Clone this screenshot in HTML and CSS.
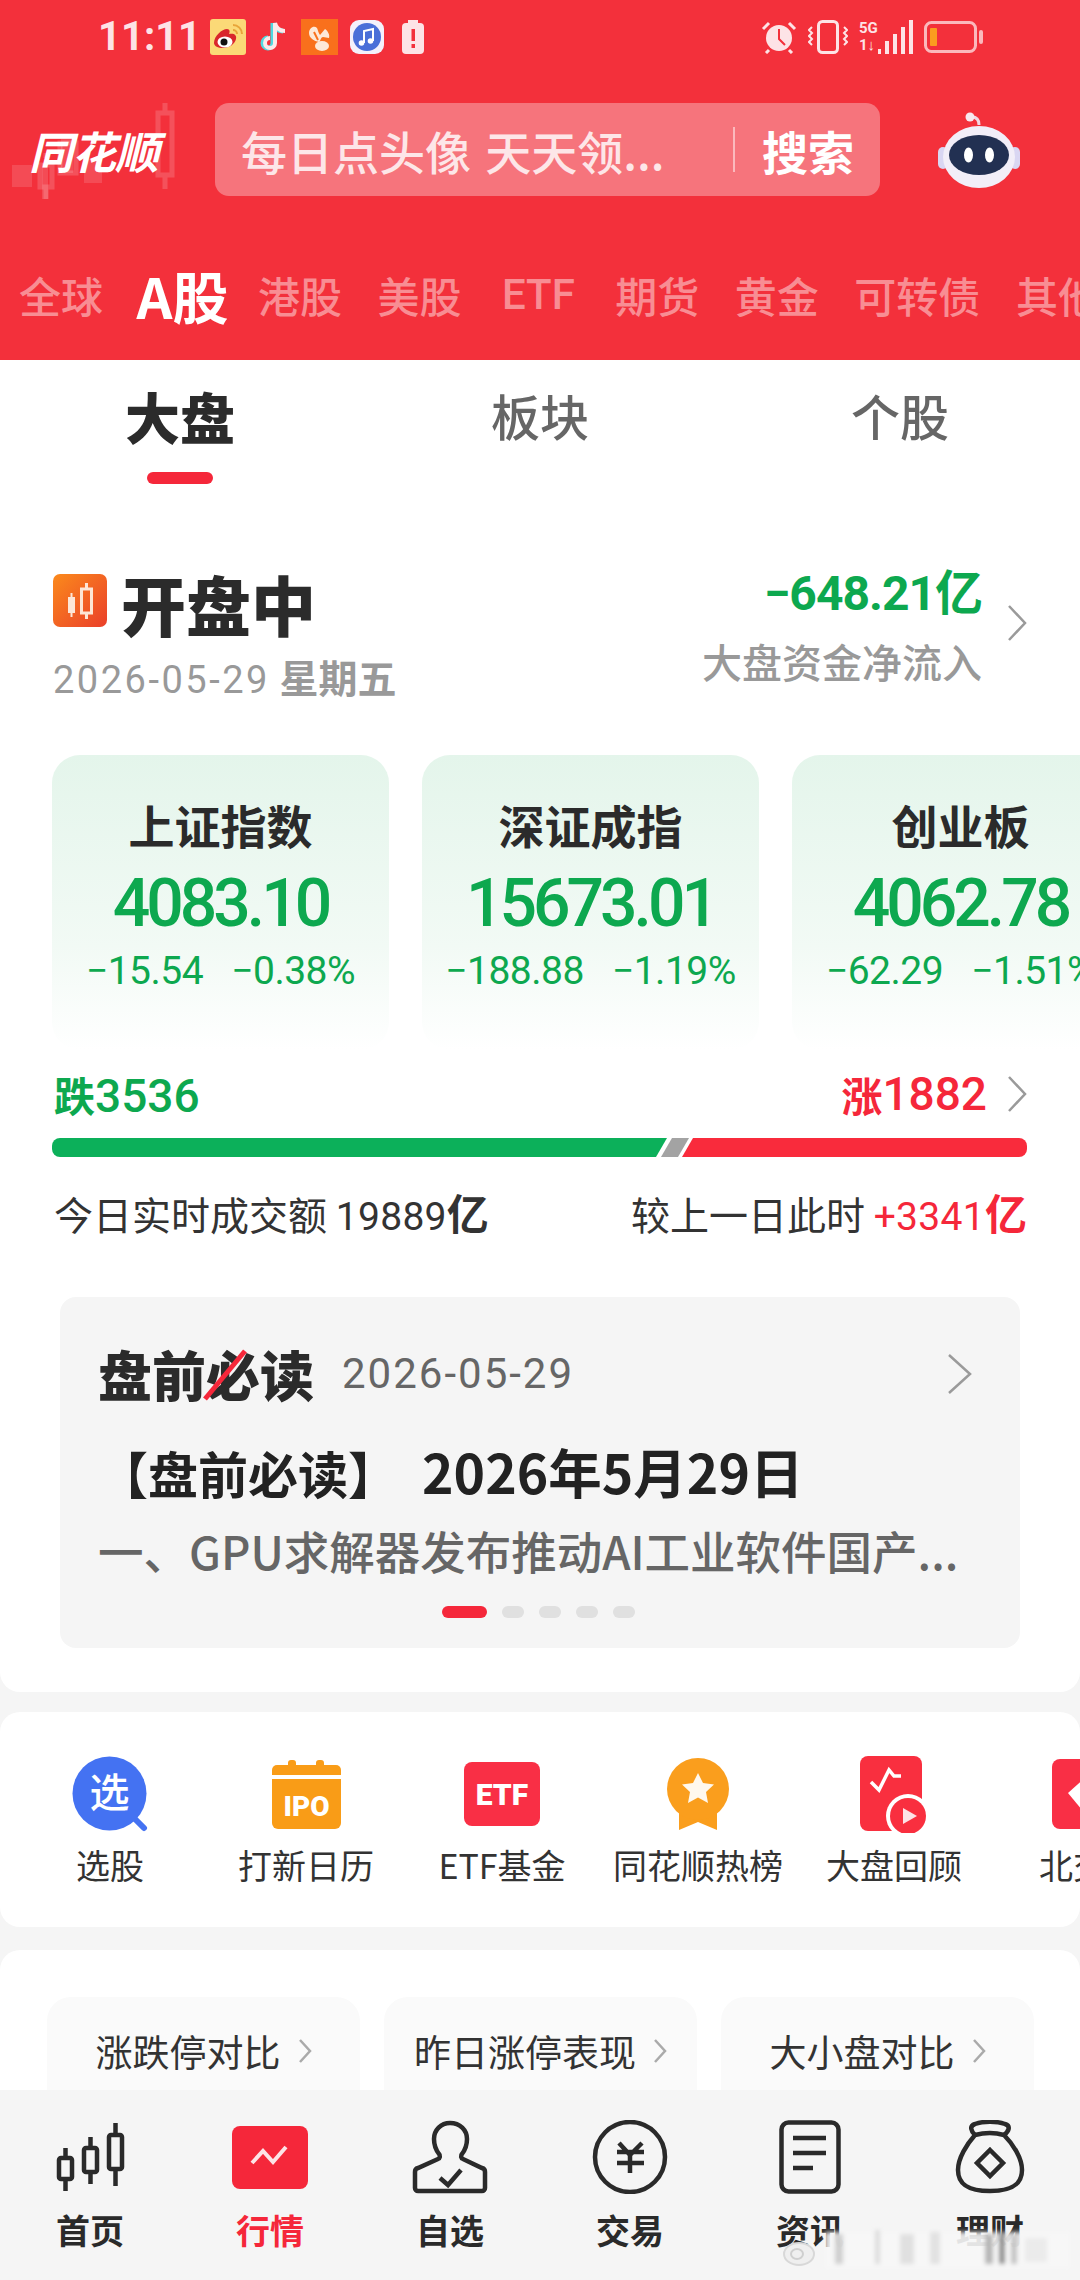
FILE: index.html
```html
<!DOCTYPE html>
<html>
  <head>
    <meta charset="utf-8">
    <title>同花顺 行情</title>
    <link rel="stylesheet" href="styles.css">
  </head>
  <body>
    <div class="page">
      <header class="header">
        <div class="status">
          <span class="time">11:11</span>
          <svg class="st-weibo" width="36" height="36" viewBox="0 0 36 36">
            <rect width="36" height="36" rx="3" fill="#fbd977"/>
            <path d="M23 6a9 9 0 0 1 9 9M23 11a4 4 0 0 1 4 4" fill="none" stroke="#e8a53a" stroke-width="2"/>
            <path d="M4 24c0-7 8-14 13-14 3 0 3 3 2 5 5-1 8 1 7 5-1 5-7 9-13 9-5 0-9-2-9-5z" fill="#d9262c"/>
            <ellipse cx="15" cy="23" rx="7.500" ry="5.500" fill="#fff"/>
            <circle cx="14" cy="23" r="3.500" fill="#111"/>
          </svg>
          <svg class="st-tiktok" width="28" height="34" viewBox="0 0 28 34">
            <path d="M15 3v20a5 5 0 1 1-5-5M15 3c1 5 5 8 10 8" fill="none" stroke="#4fd8e0" stroke-width="5"/>
            <path d="M17 3v20a5 5 0 1 1-5-5M17 3c1 5 5 8 10 8" fill="none" stroke="#fde8ea" stroke-width="4"/>
          </svg>
          <svg class="st-uc" width="37" height="36" viewBox="0 0 37 36">
            <rect width="37" height="36" fill="#f9701c"/>
            <path d="M8 14c0-5 5-8 8-5 1 2 1 4 3 7l5-6c3 2 5 6 4 9l-6-1c-2 0-2 3-4 5-5-1-10-4-10-9z" fill="#fde8d8"/>
            <ellipse cx="21" cy="27" rx="7" ry="5" fill="#fde8d8"/>
            <path d="M13 13l4 8" stroke="#f9701c" stroke-width="2"/>
          </svg>
          <svg class="st-music" width="34" height="34" viewBox="0 0 34 34">
            <rect width="34" height="34" rx="9" fill="#f4f1fb"/>
            <circle cx="17" cy="17" r="14" fill="#4a6fd8"/>
            <path d="M14 23V11l9-2v12" fill="none" stroke="#fff" stroke-width="2"/>
            <circle cx="11.500" cy="23" r="2.800" fill="#fff"/>
            <circle cx="20.500" cy="21" r="2.800" fill="#fff"/>
          </svg>
          <svg class="st-bat" width="22" height="34" viewBox="0 0 22 34">
            <rect x="6" y="0" width="10" height="3" fill="#fde3e6"/>
            <rect x="0" y="3" width="22" height="31" rx="4" fill="#fde3e6"/>
            <rect x="9.500" y="9" width="3.500" height="12" fill="#f3303b"/>
            <rect x="9.500" y="24" width="3.500" height="4" fill="#f3303b"/>
          </svg>
          <div class="status-right">
            <svg width="36" height="34" viewBox="0 0 36 34">
              <circle cx="18" cy="18" r="13" fill="#fde3e6"/>
              <path d="M18 9v10l6 6" fill="none" stroke="#f3303b" stroke-width="2"/>
              <path d="M2 9l6-6M34 9l-6-6M8 30l-3 3M28 30l3 3" stroke="#fde3e6" stroke-width="3"/>
            </svg>
            <svg width="40" height="34" viewBox="0 0 40 34">
              <rect x="10.500" y="1.500" width="19" height="31" rx="4" fill="none" stroke="#fde3e6" stroke-width="3"/>
              <path d="M4 7l-3 3 3 3-3 3 3 3-3 3 3 3M36 7l3 3-3 3 3 3-3 3 3 3-3 3" fill="none" stroke="#fde3e6" stroke-width="2"/>
            </svg>
            <div class="signal">
              <span class="net">5G<br>1↓</span>
              <i class="bar-a"></i><i class="bar-b"></i><i class="bar-c"></i><i class="bar-d"></i><i class="bar-e"></i>
            </div>
            <svg width="60" height="32" viewBox="0 0 60 32">
              <rect x="1.500" y="1.500" width="50" height="29" rx="6" fill="none" stroke="#fbb8bc" stroke-width="3"/>
              <rect x="6" y="7" width="7" height="18" rx="1" fill="#fb9c1f"/>
              <rect x="55" y="9" width="4" height="14" rx="2" fill="#fbb8bc"/>
            </svg>
          </div>
        </div>
        <div class="searchrow">
          <div class="logo">
            <svg class="logo-bg" width="215" height="125" viewBox="0 0 215 125">
              <g fill="#fff" opacity="0.13">
                <rect x="12" y="62" width="20" height="22"/>
                <rect x="42" y="60" width="6" height="36"/>
                <rect x="61" y="36" width="12" height="34"/>
                <rect x="84" y="56" width="18" height="24"/>
              </g>
              <g fill="none" stroke="#fff" stroke-width="5" opacity="0.16">
                <rect x="40" y="62" width="12" height="22"/>
                <path d="M46 55v-5M46 84v12"/>
                <rect x="60" y="40" width="16" height="30"/>
                <rect x="158" y="10" width="14" height="62"/>
                <path d="M165 0v10M165 72v14"/>
              </g>
            </svg>
            <span class="logo-text">同花顺</span>
          </div>
          <div class="searchbox">
            <span class="hint">每日点头像 天天领...</span>
            <span class="divider"></span>
            <span class="search-btn">搜索</span>
          </div>
          <svg class="robot" width="84" height="78" viewBox="0 0 84 78">
            <path d="M42 14c0-5-2-8-7-8" fill="none" stroke="#f1d8e4" stroke-width="3"/>
            <circle cx="33" cy="6" r="4.500" fill="#f7e9f0"/>
            <rect x="1" y="36" width="10" height="22" rx="5" fill="#d9d6f2"/>
            <rect x="73" y="36" width="10" height="22" rx="5" fill="#d9d6f2"/>
            <ellipse cx="42" cy="46" rx="36" ry="31" fill="#f2eef8"/>
            <ellipse cx="42" cy="44" rx="30" ry="20" fill="#223052"/>
            <ellipse cx="31.500" cy="44" rx="4.500" ry="7.500" fill="#fff"/>
            <ellipse cx="52.500" cy="44" rx="4.500" ry="7.500" fill="#fff"/>
          </svg>
        </div>
        <nav class="markets">
          <span>全球</span>
          <span class="on">A股</span>
          <span>港股</span>
          <span>美股</span>
          <span class="etf">ETF</span>
          <span>期货</span>
          <span>黄金</span>
          <span>可转债</span>
          <span>其他</span>
        </nav>
      </header>

      <main class="content">
        <section class="panel market">
          <div class="subtabs">
            <div class="subtab on">大盘<i class="line"></i></div>
            <div class="subtab">板块</div>
            <div class="subtab">个股</div>
          </div>

          <div class="summary">
            <div class="sum-left">
              <div class="state">
                <svg class="state-icon" width="54" height="53" viewBox="0 0 54 53">
                  <defs>
                    <linearGradient id="stateGrad" x1="0" y1="0" x2="1" y2="1">
                      <stop offset="0" stop-color="#fb8a1c"/>
                      <stop offset="1" stop-color="#ea3f2a"/>
                    </linearGradient>
                  </defs>
                  <rect width="54" height="53" rx="7" fill="url(#stateGrad)"/>
                  <rect x="15" y="23" width="7" height="16" fill="#fde6d6"/>
                  <path d="M18.500 19v24" stroke="#fde6d6" stroke-width="2"/>
                  <rect x="28.500" y="15" width="10" height="24" fill="none" stroke="#fde6d6" stroke-width="3"/>
                  <path d="M33.500 9v6M33.500 39v6" stroke="#fde6d6" stroke-width="3"/>
                </svg>
                <span class="state-text">开盘中</span>
              </div>
              <div class="today"><span class="today-date">2026-05-29</span> <b>星期五</b></div>
            </div>
            <div class="sum-right">
              <div class="flow">
                <div class="flow-num num">−648.21<b>亿</b></div>
                <div class="flow-label">大盘资金净流入</div>
              </div>
              <svg class="chev" width="20" height="38" viewBox="0 0 20 38"><path d="M2 2l16 17L2 36" fill="none" stroke="#9a9a9a" stroke-width="2.500"/></svg>
            </div>
          </div>

          <div class="cards">
            <div class="card">
              <div class="card-name">上证指数</div>
              <div class="card-val num">4083.10</div>
              <div class="card-sub num"><span>−15.54</span><span>−0.38%</span></div>
            </div>
            <div class="card">
              <div class="card-name">深证成指</div>
              <div class="card-val num">15673.01</div>
              <div class="card-sub num"><span>−188.88</span><span>−1.19%</span></div>
            </div>
            <div class="card">
              <div class="card-name">创业板</div>
              <div class="card-val num">4062.78</div>
              <div class="card-sub num"><span>−62.29</span><span>−1.51%</span></div>
            </div>
          </div>

          <div class="updown">
            <div class="down"><b>跌</b><span class="num">3536</span></div>
            <div class="up"><b>涨</b><span class="num">1882</span>
              <svg class="chev" width="20" height="38" viewBox="0 0 20 38"><path d="M2 2l16 17L2 36" fill="none" stroke="#9a9a9a" stroke-width="2.500"/></svg>
            </div>
          </div>
          <svg class="ratio" width="975" height="19" viewBox="0 0 975 19">
            <path d="M8 0H615L604 19H8a8 8 0 0 1-8-8V8a8 8 0 0 1 8-8z" fill="#0cb05a"/>
            <path d="M620 0H637L626 19H609z" fill="#a3a3a3"/>
            <path d="M641 0H967a8 8 0 0 1 8 8v3a8 8 0 0 1-8 8H630z" fill="#f92b3c"/>
          </svg>
          <div class="volume">
            <div class="vol-left">今日实时成交额 <span class="num">19889</span><b>亿</b></div>
            <div class="vol-right">较上一日此时 <span class="red"><span class="num">+3341</span><b>亿</b></span></div>
          </div>

          <div class="readcard">
            <div class="read-head">
              <span class="read-logo">盘前必读<svg class="read-slash" width="46" height="56" viewBox="0 0 46 56"><path d="M2 52L42 4" stroke="#f5273a" stroke-width="5"/></svg></span>
              <span class="read-date">2026-05-29</span>
              <svg class="read-chev" width="26" height="42" viewBox="0 0 26 42"><path d="M2 2l21 19L2 40" fill="none" stroke="#9a9a9a" stroke-width="2.500"/></svg>
            </div>
            <div class="read-title">【盘前必读】<span class="read-day">2026年5月29日</span></div>
            <div class="read-text">一、GPU求解器发布推动AI工业软件国产...</div>
            <div class="dots"><i class="active"></i><i></i><i></i><i></i><i></i></div>
          </div>
        </section>

        <section class="panel quick">
          <div class="quick-item">
            <div class="quick-icon">
              <svg width="76" height="76" viewBox="0 0 76 76">
                <path d="M58 58l14 14" stroke="#4472f2" stroke-width="6" stroke-linecap="round"/>
                <circle cx="37.500" cy="37.500" r="37" fill="#4472f2"/>
                <text x="37.500" y="51" class="icon-zh">选</text>
              </svg>
            </div>
            <span>选股</span>
          </div>
          <div class="quick-item">
            <div class="quick-icon">
              <svg width="69" height="69" viewBox="0 0 69 69">
                <path d="M16 6V3a3 3 0 0 1 3-3h2a3 3 0 0 1 3 3v3zM44 6V3a3 3 0 0 1 3-3h2a3 3 0 0 1 3 3v3z" fill="#f99c17"/>
                <path d="M5 5h59a5 5 0 0 1 5 5v5H0v-5a5 5 0 0 1 5-5z" fill="#f99c17"/>
                <path d="M0 19h69v44a6 6 0 0 1-6 6H6a6 6 0 0 1-6-6z" fill="#f99c17"/>
                <text x="34.500" y="56" class="icon-en ipo">IPO</text>
              </svg>
            </div>
            <span>打新日历</span>
          </div>
          <div class="quick-item">
            <div class="quick-icon">
              <svg width="76" height="64" viewBox="0 0 76 64">
                <rect width="76" height="64" rx="8" fill="#f92f45"/>
                <text x="38" y="43" class="icon-en etf-mark">ETF</text>
              </svg>
            </div>
            <span>ETF基金</span>
          </div>
          <div class="quick-item">
            <div class="quick-icon">
              <svg width="62" height="72" viewBox="0 0 62 72">
                <path d="M12 50v22l19-8 19 8V50z" fill="#fa9e1d"/>
                <circle cx="31" cy="31" r="31" fill="#fa9e1d"/>
                <path d="M31 15l5 10 11 1.500-8 7.500 2 11-10-5.500L21 45l2-11-8-7.500L26 25z" fill="#fff8ee"/>
              </svg>
            </div>
            <span>同花顺热榜</span>
          </div>
          <div class="quick-item">
            <div class="quick-icon">
              <svg width="70" height="78" viewBox="0 0 70 78">
                <rect width="62" height="75" x="1" y="1" rx="8" fill="#f92f3f"/>
                <path d="M12 27l8 8 10-20 5 6h7" fill="none" stroke="#fff" stroke-width="3.500"/>
                <circle cx="49" cy="61" r="22" fill="#fff"/>
                <circle cx="49" cy="61" r="18" fill="#f92f3f"/>
                <path d="M44 53l14 8-14 8z" fill="#fde3e6"/>
              </svg>
            </div>
            <span>大盘回顾</span>
          </div>
          <div class="quick-item">
            <div class="quick-icon">
              <svg width="76" height="70" viewBox="0 0 76 70">
                <rect width="76" height="70" rx="8" fill="#f92f45"/>
                <path d="M36 16l22 18-22 24-20-24z" fill="#fff"/>
              </svg>
            </div>
            <span>北交所</span>
          </div>
        </section>

        <section class="panel compare">
          <div class="cmp"><span>涨跌停对比</span><svg width="14" height="26" viewBox="0 0 14 26"><path d="M2 2l10 11L2 24" fill="none" stroke="#aaa" stroke-width="2.500"/></svg></div>
          <div class="cmp"><span>昨日涨停表现</span><svg width="14" height="26" viewBox="0 0 14 26"><path d="M2 2l10 11L2 24" fill="none" stroke="#aaa" stroke-width="2.500"/></svg></div>
          <div class="cmp"><span>大小盘对比</span><svg width="14" height="26" viewBox="0 0 14 26"><path d="M2 2l10 11L2 24" fill="none" stroke="#aaa" stroke-width="2.500"/></svg></div>
        </section>
      </main>

      <nav class="tabbar">
        <div class="tab">
          <svg width="70" height="72" viewBox="0 0 70 72">
            <g fill="none" stroke="#2a2a2a" stroke-width="4.500">
              <rect x="4" y="37" width="13" height="21" rx="2"/>
              <path d="M10.500 27v10M10.500 58v12"/>
              <rect x="29" y="27" width="13" height="24" rx="2"/>
              <path d="M35.500 16v11M35.500 51v12"/>
              <rect x="54" y="14" width="13" height="34" rx="2"/>
              <path d="M60.500 2v12M60.500 48v17"/>
            </g>
          </svg>
          <span>首页</span>
        </div>
        <div class="tab on">
          <svg width="76" height="72" viewBox="0 0 76 72">
            <rect y="5" width="76" height="63" rx="8" fill="#f5273a"/>
            <path d="M20 42l11-12 10 11 13-15" fill="none" stroke="#fde3e6" stroke-width="4"/>
          </svg>
          <span>行情</span>
        </div>
        <div class="tab">
          <svg width="76" height="72" viewBox="0 0 76 72">
            <path d="M6 70H70a3 3 0 0 0 3-3V51a4 4 0 0 0-3-4L51 38a3 3 0 0 1-1-5C53 29 55 24 55 18 55 9 48 2 38 2 29 2 22 9 22 18 22 24 24 29 27 33a3 3 0 0 1-1 5L6 47a4 4 0 0 0-3 4V67a3 3 0 0 0 3 3Z" fill="none" stroke="#2a2a2a" stroke-width="4.500"/>
            <path d="M28 57l8 7 13-15" fill="none" stroke="#2a2a2a" stroke-width="4.500"/>
          </svg>
          <span>自选</span>
        </div>
        <div class="tab">
          <svg width="76" height="74" viewBox="0 0 76 74">
            <circle cx="38" cy="37" r="35" fill="none" stroke="#2a2a2a" stroke-width="4.500"/>
            <path d="M27 23l11 12 12-12M25 32h27M25 43h27M38 35v18" fill="none" stroke="#2a2a2a" stroke-width="4.500"/>
          </svg>
          <span>交易</span>
        </div>
        <div class="tab">
          <svg width="62" height="74" viewBox="0 0 62 74">
            <rect x="2.500" y="2.500" width="57" height="69" rx="7" fill="none" stroke="#2a2a2a" stroke-width="4.500"/>
            <path d="M14 18h33M14 33h33M14 48h20" fill="none" stroke="#2a2a2a" stroke-width="4.500"/>
          </svg>
          <span>资讯</span>
        </div>
        <div class="tab">
          <svg width="70" height="74" viewBox="0 0 70 74">
            <g fill="none" stroke="#2a2a2a" stroke-width="4.500">
              <path d="M20 15C16 11 14 6 20 4 28 1 42 1 50 4 56 6 54 11 49 15"/>
              <path d="M20 15Q35 11 49 15C58 24 67 38 67 50 67 65 56 71 35 71 14 71 3 65 3 50 3 38 12 24 20 15Z"/>
              <path d="M35 30L48 43 35 56 22 43Z"/>
            </g>
          </svg>
          <span>理财</span>
        </div>
      </nav>

      <svg class="watermark" width="300" height="46" viewBox="0 0 300 46">
        <defs><filter id="soft"><feGaussianBlur stdDeviation="2"/></filter></defs>
        <g filter="url(#soft)">
          <rect x="50" y="6" width="245" height="36" fill="#f7f7f7" opacity="0.9"/>
          <rect x="60" y="8" width="8" height="30" fill="#cfcfcf"/>
          <rect x="100" y="4" width="5" height="34" fill="#dcdcdc"/>
          <rect x="125" y="8" width="14" height="30" fill="#e0e0e0"/>
          <rect x="155" y="6" width="10" height="32" fill="#e2e2e2"/>
          <rect x="210" y="8" width="8" height="30" fill="#b5b5b5"/>
          <rect x="224" y="6" width="6" height="32" fill="#8a8a8a"/>
          <rect x="236" y="8" width="6" height="30" fill="#c2c2c2"/>
          <rect x="250" y="12" width="22" height="24" fill="#ebebeb"/>
        </g>
        <ellipse cx="24" cy="28" rx="15" ry="11" fill="#efefef" stroke="#d8d8d8" stroke-width="2"/>
        <ellipse cx="22" cy="28" rx="6" ry="5" fill="none" stroke="#cfcfcf" stroke-width="2"/>
      </svg>
    </div>
  </body>
</html>
```

FILE: styles.css
```css
* {
  box-sizing: border-box;
}
body {
  margin: 0;
  background-color: #f5f5f5;
  font-family: "Noto Sans CJK SC", sans-serif;
  color: #333;
}
b {
  font-weight: 700;
}
.num {
  font-family: Roboto, "Noto Sans CJK SC", sans-serif;
}
.page {
  position: relative;
  display: flex;
  flex-direction: column;
  width: 1080px;
  height: 2280px;
  overflow: hidden;
}

/* red header */
.header {
  flex: 0 0 360px;
  background-color: #f3303b;
  overflow: hidden;
}
.status {
  display: flex;
  align-items: center;
  height: 103px;
  padding: 0 96px 30px 98px;
  gap: 12px;
}
.time {
  width: 100px;
  font-family: Roboto, sans-serif;
  font-weight: 700;
  font-size: 40px;
  color: #fde3e6;
}
.st-uc {
  margin-left: 3px;
}
.st-bat {
  margin-left: 6px;
}
.status-right {
  display: flex;
  align-items: center;
  gap: 11px;
  margin-left: auto;
}
.signal {
  display: flex;
  align-items: flex-end;
  gap: 4px;
  height: 34px;
  width: 54px;
}
.signal i {
  display: block;
  width: 4px;
  background-color: #fde3e6;
}
.net {
  font-family: Roboto, sans-serif;
  font-size: 15px;
  line-height: 17px;
  font-weight: 700;
  color: #fde3e6;
  margin-right: -4px;
  white-space: nowrap;
}
.signal .bar-a { height: 5px; width: 3px; }
.signal .bar-b { height: 13px; }
.signal .bar-c { height: 20px; }
.signal .bar-d { height: 27px; }
.signal .bar-e { height: 34px; }

.searchrow {
  display: flex;
  align-items: center;
  height: 93px;
}
.logo {
  position: relative;
  display: flex;
  align-items: center;
  width: 215px;
  height: 93px;
  padding-left: 29px;
}
.logo-bg {
  position: absolute;
  left: 0;
  top: 0;
}
.logo-text {
  position: relative;
  font-size: 44px;
  font-weight: 700;
  font-style: italic;
  line-height: 1;
  letter-spacing: -1px;
  color: #fff;
}
.searchbox {
  display: flex;
  align-items: center;
  width: 665px;
  height: 93px;
  padding-left: 26px;
  border-radius: 14px;
  background-color: #f6747c;
}
.hint {
  width: 492px;
  font-size: 46px;
  line-height: 1;
  font-weight: 500;
  word-spacing: 4px;
  color: #fde6e8;
  white-space: nowrap;
}
.divider {
  width: 2px;
  height: 45px;
  background-color: #fbb9bd;
}
.search-btn {
  margin-left: 27px;
  font-size: 46px;
  line-height: 1;
  font-weight: 700;
  color: #fff;
}
.robot {
  margin-left: 57px;
}
.markets {
  display: flex;
  align-items: center;
  gap: 35.500px;
  height: 50px;
  margin-top: 73px;
  padding-left: 19px;
  font-size: 42px;
  font-weight: 500;
  color: #f88d93;
  white-space: nowrap;
}
.markets span {
  flex: none;
}
.markets .on {
  margin: 0 -6px 0 -2px;
  font-size: 56px;
  font-weight: 700;
  color: #fff;
}
.markets .etf {
  font-family: Roboto, sans-serif;
  font-size: 42px;
  margin: 0 5px;
}

/* scrolling content */
.content {
  flex: 1;
  overflow: hidden;
}
.panel {
  background-color: #fff;
}
.market {
  height: 1332px;
  border-radius: 0 0 20px 20px;
  overflow: hidden;
}
.subtabs {
  display: grid;
  grid-template-columns: repeat(3, 360px);
  padding-top: 29px;
}
.subtab {
  display: flex;
  flex-direction: column;
  align-items: center;
  height: 95px;
  font-size: 49px;
  line-height: 52px;
  font-weight: 500;
  color: #666;
}
.subtab.on {
  font-size: 55px;
  font-weight: 900;
  color: #2b2b2b;
}
.line {
  display: block;
  width: 66px;
  height: 15px;
  margin-top: 31px;
  border-radius: 8px;
  background-color: #f5273a;
}
.summary {
  display: flex;
  justify-content: space-between;
  margin-top: 86px;
  padding: 0 53px;
}
.state {
  display: flex;
  align-items: center;
  gap: 14px;
  height: 72px;
  margin-top: -3px;
}
.state-icon {
  margin-top: -5px;
}
.state-text {
  font-size: 65px;
  line-height: 72px;
  font-weight: 900;
  color: #2b2b2b;
}
.today {
  margin-top: 21px;
  font-size: 39px;
  line-height: 40px;
  color: #999;
  font-family: Roboto, "Noto Sans CJK SC", sans-serif;
}
.today-date {
  font-size: 38px;
  letter-spacing: 2.5px;
}
.sum-right {
  display: flex;
  align-items: flex-start;
  gap: 25px;
}
.sum-right .chev {
  margin-top: 34px;
}
.flow {
  margin-top: -7px;
  text-align: right;
}
.flow-num {
  font-size: 48px;
  line-height: 52px;
  font-weight: 700;
  color: #0da84f;
  letter-spacing: -1px;
}
.flow-num b {
  font-family: "Noto Sans CJK SC", sans-serif;
}
.flow-label {
  margin-top: 19px;
  font-size: 40px;
  line-height: 44px;
  font-weight: 500;
  color: #999;
}
.cards {
  display: flex;
  gap: 33px;
  margin-top: 55px;
  padding-left: 52px;
}
.card {
  flex: 0 0 337px;
  height: 295px;
  padding-top: 44px;
  border-radius: 28px;
  background: linear-gradient(#e4f5eb, #f2faf5 65%, #ffffff);
  text-align: center;
}
.card-name {
  font-size: 46px;
  line-height: 50px;
  font-weight: 700;
  color: #2b2b2b;
}
.card-val {
  margin-top: 20px;
  font-size: 66px;
  line-height: 70px;
  font-weight: 500;
  letter-spacing: -4px;
  color: #0da84f;
}
.card-sub {
  display: flex;
  justify-content: center;
  gap: 28px;
  margin-top: 10px;
  font-size: 39px;
  line-height: 44px;
  letter-spacing: -0.5px;
  color: #0da84f;
  white-space: nowrap;
}
.updown {
  display: flex;
  justify-content: space-between;
  margin-top: 19px;
  padding: 0 53px 0 54px;
  height: 50px;
  line-height: 50px;
  font-size: 41px;
}
.updown .num {
  font-size: 46px;
  font-weight: 500;
}
.down {
  color: #0da84f;
}
.up {
  display: flex;
  align-items: center;
  color: #f5273a;
}
.up .chev {
  margin-left: 20px;
}
.ratio {
  display: block;
  margin: 19px 0 0 52px;
}
.volume {
  display: flex;
  justify-content: space-between;
  margin-top: 33px;
  padding: 0 53px 0 54px;
  font-size: 39px;
  line-height: 44px;
  color: #333;
}
.volume .num {
  letter-spacing: 0.3px;
}
.volume b {
  font-size: 42px;
}
.red {
  color: #f5273a;
}
.readcard {
  height: 351px;
  margin: 58px 60px 0;
  padding: 50px 47px 0 38px;
  border-radius: 16px;
  background-color: #f5f5f5;
}
.read-head {
  display: flex;
  align-items: center;
  height: 54px;
}
.read-logo {
  position: relative;
  font-size: 54px;
  line-height: 54px;
  font-weight: 900;
  color: #2b2b2b;
}
.read-slash {
  position: absolute;
  left: 105px;
  top: 0;
}
.read-date {
  margin-left: 28px;
  font-size: 42px;
  line-height: 54px;
  letter-spacing: 2px;
  font-family: Roboto, sans-serif;
  color: #666;
}
.read-chev {
  margin-left: auto;
}
.read-title {
  display: flex;
  align-items: baseline;
  margin-top: 40px;
  font-size: 50px;
  line-height: 60px;
  font-weight: 700;
  color: #222;
  white-space: nowrap;
}
.read-day {
  margin-left: 24px;
  font-size: 53.500px;
}
.read-text {
  margin-top: 20px;
  font-size: 45.500px;
  line-height: 56px;
  font-weight: 500;
  color: #666;
  white-space: nowrap;
}
.dots {
  display: flex;
  justify-content: center;
  gap: 15px;
  margin-top: 28px;
  padding-left: 6px;
}
.dots i {
  display: block;
  width: 22px;
  height: 12px;
  border-radius: 6px;
  background-color: #e0e0e0;
}
.dots .active {
  width: 45px;
  background-color: #f5273a;
}
.quick {
  display: flex;
  height: 215px;
  margin-top: 20px;
  padding: 43px 0 0 12px;
  border-radius: 20px;
  overflow: hidden;
}
.quick-item {
  flex: 0 0 196px;
  display: flex;
  flex-direction: column;
  align-items: center;
  font-size: 34px;
  line-height: 40px;
  color: #333;
  white-space: nowrap;
}
.quick-icon {
  display: flex;
  align-items: center;
  justify-content: center;
  height: 78px;
  margin-bottom: 12px;
}
.icon-zh {
  font-size: 40px;
  font-weight: 500;
  fill: #fff;
  text-anchor: middle;
}
.icon-en {
  font-family: Roboto, sans-serif;
  font-weight: 900;
  fill: #fff;
  text-anchor: middle;
}
.ipo {
  font-size: 28px;
}
.etf-mark {
  font-size: 30px;
}
.compare {
  display: flex;
  gap: 24px;
  height: 200px;
  margin-top: 23px;
  padding: 47px 47px 0;
  border-radius: 20px 20px 0 0;
}
.cmp {
  flex: 0 0 313px;
  display: flex;
  justify-content: center;
  gap: 17px;
  height: 130px;
  padding-top: 34px;
  border-radius: 24px;
  background-color: #fafafa;
  font-size: 37px;
  line-height: 40px;
  color: #333;
  white-space: nowrap;
}
.cmp svg {
  margin-top: 7px;
}

/* bottom bar */
.tabbar {
  flex: 0 0 190px;
  display: grid;
  grid-template-columns: repeat(6, 180px);
  padding-top: 30px;
  background-color: #f5f5f5;
}
.tab {
  display: flex;
  flex-direction: column;
  align-items: center;
  font-size: 34px;
  font-weight: 700;
  line-height: 40px;
  color: #2a2a2a;
}
.tab svg {
  height: 74px;
  margin-bottom: 16px;
}
.tab.on {
  color: #f5273a;
}
.watermark {
  position: absolute;
  right: 5px;
  bottom: 8px;
}
```
